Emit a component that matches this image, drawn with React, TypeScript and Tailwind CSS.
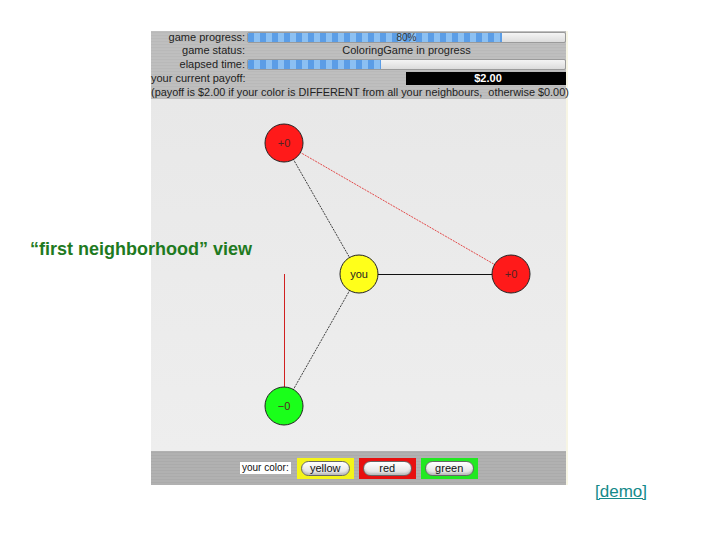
import React from 'react';

const font = { fontFamily: '"Liberation Sans", Arial, sans-serif' };

function Bar({ pct, label }: { pct: number; label?: string }) {
  return (
    <div className="relative h-[11px] flex-1 rounded-[2px] bg-[linear-gradient(#f4f4f4,#dcdcdc)] border border-[#9a9a9a] overflow-hidden">
      <div
        className="h-full bg-[repeating-linear-gradient(90deg,#5b9de6_0px,#5b9de6_6px,#8cc0f2_6px,#8cc0f2_12px)]"
        style={{ width: `${pct}%` }}
      />
      {label && (
        <span className="absolute inset-0 flex items-center justify-center text-[10px] leading-none text-[#333]">
          {label}
        </span>
      )}
    </div>
  );
}

const nodes = [
  { x: 133, y: 44, fill: '#ff1a1a', text: '+0' },
  { x: 208, y: 175, fill: '#ffff1a', text: 'you' },
  { x: 360, y: 175, fill: '#ff1a1a', text: '+0' },
  { x: 133, y: 307, fill: '#1aff1a', text: '−0' },
];

function ColorButton({ label, box }: { label: string; box: string }) {
  return (
    <div className={`flex items-center px-[4px] py-[3px] ${box}`}>
      <div className="h-[15px] rounded-full border border-[#666] bg-[linear-gradient(#ffffff,#dcdcdc)] flex items-center justify-center text-[11px] text-[#111] w-[49px] shadow-[inset_0_-2px_2px_rgba(0,0,0,0.15)]">
        {label}
      </div>
    </div>
  );
}

export default function App() {
  return (
    <div className="relative w-[720px] h-[540px] bg-white overflow-hidden" style={font}>
      <div className="flex items-start">
        <div className="ml-[151px] mt-[31px] w-[417px] flex flex-col border-r-2 border-[#f7f5e4]">
          {/* header */}
          <div className="bg-[repeating-linear-gradient(180deg,#c2c2c2_0px,#b6b6b6_2px,#c6c6c6_3px)] text-[11px] text-[#222] leading-none">
            <div className="flex items-center h-[13px]">
              <span className="w-[96px] text-right pr-[2px]">game progress:</span>
              <Bar pct={80} label="80%" />
            </div>
            <div className="flex items-center h-[13px]">
              <span className="w-[96px] text-right pr-[2px]">game status:</span>
              <span className="flex-1 text-center">ColoringGame in progress</span>
            </div>
            <div className="flex items-center h-[14px]">
              <span className="w-[96px] text-right pr-[2px]">elapsed time:</span>
              <Bar pct={42} />
            </div>
            <div className="flex items-center h-[14px]">
              <span className="flex-1">your current payoff:</span>
              <span className="w-[160px] h-[13px] bg-black text-white font-bold text-[11px] flex items-center justify-center pl-[4px]">
                $2.00
              </span>
            </div>
            <div className="flex items-center h-[14px] text-[10.9px] whitespace-nowrap">
              (payoff is $2.00 if your color is DIFFERENT from all your neighbours,&nbsp; otherwise $0.00)
            </div>
          </div>
          {/* graph */}
          <div className="h-[352px] bg-[linear-gradient(#e8e8e8,#eeeeee)]">
            <svg width="417" height="352" viewBox="0 0 417 352">
              <line x1="133.5" y1="175" x2="133.5" y2="288" stroke="#d02020" strokeWidth="1" />
              <line x1="133" y1="44" x2="360" y2="175" stroke="#e02020" strokeWidth="0.8" strokeDasharray="2 1" />
              <line x1="133" y1="44" x2="208" y2="175" stroke="#111" strokeWidth="0.8" strokeDasharray="2 1" />
              <line x1="208" y1="175" x2="133" y2="307" stroke="#111" strokeWidth="0.8" strokeDasharray="2 1" />
              <line x1="208" y1="175.5" x2="360" y2="175.5" stroke="#111" strokeWidth="1" />
              {nodes.map((n, i) => (
                <g key={i}>
                  <circle cx={n.x} cy={n.y} r="19" fill={n.fill} stroke="#222" strokeWidth="1" />
                  <text
                    x={n.x}
                    y={n.y + 4}
                    textAnchor="middle"
                    fontSize="11"
                    fill={n.text === 'you' ? '#222' : '#552222'}
                    fontFamily='"Liberation Sans", Arial, sans-serif'
                  >
                    {n.text}
                  </text>
                </g>
              ))}
            </svg>
          </div>
          {/* color picker */}
          <div className="h-[34px] bg-[repeating-linear-gradient(180deg,#b4b4b4_0px,#a8a8a8_2px,#bababa_3px)] flex items-center pl-[89px] gap-[5px]">
            <span className="bg-white text-[10px] text-[#111] px-[2px] h-[12px] leading-[12px] mr-[1px]">your color:</span>
            <ColorButton label="yellow" box="bg-[#f4f41a]" />
            <ColorButton label="red" box="bg-[#e81010]" />
            <ColorButton label="green" box="bg-[#22e822]" />
          </div>
        </div>
        <a className="ml-[27px] mt-[479px] text-[17px] text-[#148a8a] underline">[demo]</a>
      </div>
      <div className="absolute left-[30px] top-[236px] text-[18px] font-bold text-[#1f7a1f]">
        “first neighborhood” view
      </div>
    </div>
  );
}
